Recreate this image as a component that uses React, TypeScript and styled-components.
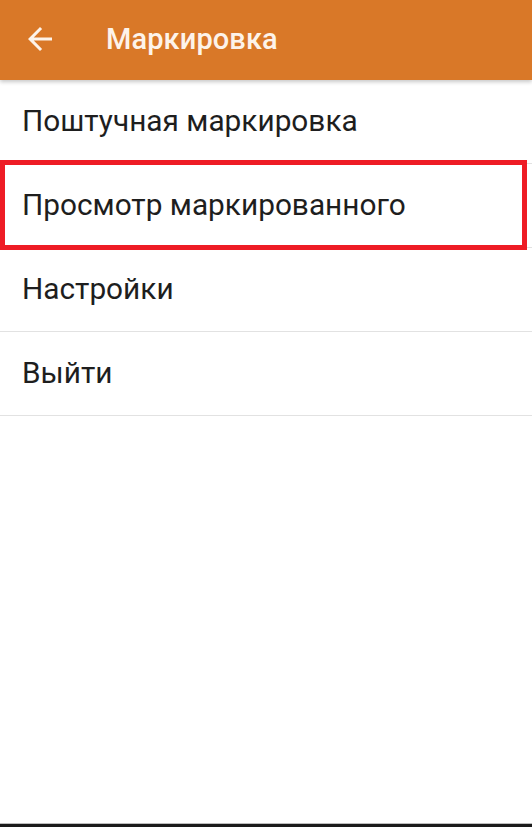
import React from 'react';
import styled, { createGlobalStyle } from 'styled-components';

const GlobalStyle = createGlobalStyle`
  html, body {
    margin: 0;
    padding: 0;
    background: #ffffff;
  }
  body {
    font-family: Roboto, "Noto Sans", sans-serif;
  }
`;

const Screen = styled.div`
  width: 532px;
  height: 827px;
  display: flex;
  flex-direction: column;
  background: #ffffff;
  overflow: hidden;
`;

const AppBar = styled.header`
  height: 80px;
  flex-shrink: 0;
  display: flex;
  align-items: center;
  background-color: #d97828;
  box-shadow: 0 2px 4px rgba(0, 0, 0, 0.22);
  position: relative;
  z-index: 1;
`;

const BackButton = styled.button`
  width: 80px;
  height: 80px;
  display: flex;
  align-items: center;
  justify-content: center;
  padding: 0 0 2px 0;
  margin-right: 26px;
  border: 0;
  background: transparent;
`;

const Title = styled.h1`
  margin: 0 0 2px 0;
  color: #fdf3ea;
  font-size: 29px;
  font-weight: 500;
  letter-spacing: 0.1px;
`;

const Menu = styled.ul`
  list-style: none;
  margin: 0;
  padding: 0;
  flex: 1;
`;

const MenuItem = styled.li<{ $highlighted?: boolean }>`
  position: relative;
  box-sizing: border-box;
  height: 84px;
  display: flex;
  align-items: center;
  padding: 0 0 3px 22px;
  border-bottom: 1px solid #e2e2e2;
  color: #1e1e1e;
  font-size: 29.8px;

  ${(props) =>
    props.$highlighted &&
    `
    &::after {
      content: '';
      position: absolute;
      left: 0;
      top: -4px;
      width: 527px;
      height: 90px;
      box-sizing: border-box;
      border: 5px solid #ee1c25;
    }
  `}
`;

const BottomEdge = styled.div`
  height: 3px;
  flex-shrink: 0;
  background: #1b1b1b;
  border-top: 1px solid #bdbdbd;
`;

const items = [
  'Поштучная маркировка',
  'Просмотр маркированного',
  'Настройки',
  'Выйти',
];

export default function App() {
  return (
    <Screen>
      <GlobalStyle />
      <AppBar>
        <BackButton aria-label='back'>
          <svg width='36' height='36' viewBox='0 0 24 24'>
            <path
              d='M20 11H7.83l5.59-5.59L12 4l-8 8 8 8 1.41-1.41L7.83 13H20v-2z'
              fill='#fdf3ea'
            />
          </svg>
        </BackButton>
        <Title>Маркировка</Title>
      </AppBar>
      <Menu>
        {items.map((item, i) => (
          <MenuItem key={item} $highlighted={i === 1}>
            {item}
          </MenuItem>
        ))}
      </Menu>
      <BottomEdge />
    </Screen>
  );
}
